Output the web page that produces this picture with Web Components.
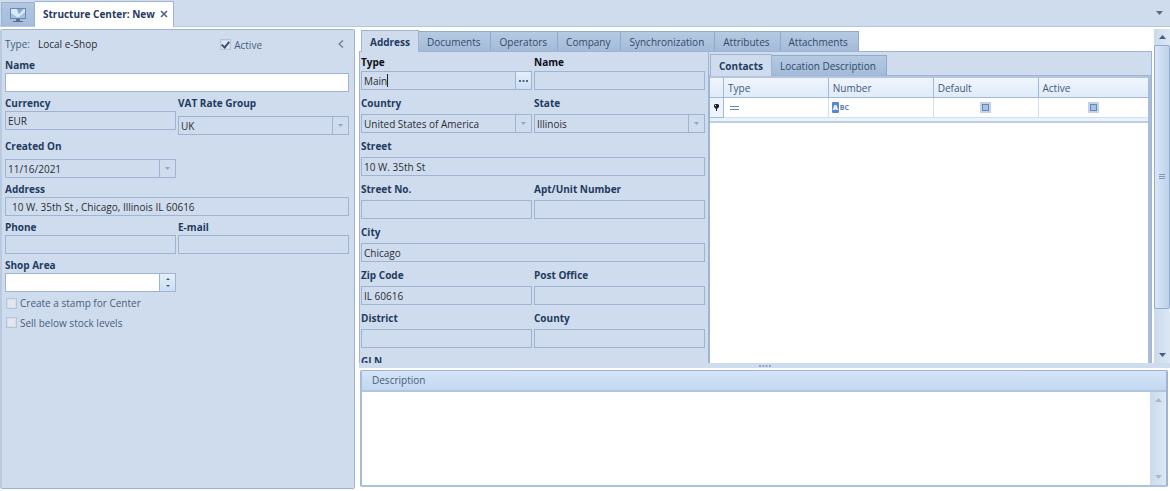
<!DOCTYPE html>
<html lang="en">
<head>
<meta charset="utf-8">
<title>Structure Center: New</title>
<style>
html, body {
  margin: 0;
  height: 100%;
}

body {
  --bg: #cfdced;
  --line: #9eb4d2;
  --soft: #b9cae0;
  --ink: #2b2d33;
  --muted: #475c7c;
  --bold: #1f3b60;
  font: 10px/16px "Open Sans", "Noto Sans", sans-serif;
  color: var(--ink);
  background: white;
  overflow: hidden;
}
</style>
</head>
<body>
<structure-center></structure-center>

<script>
const base = `
*{
  box-sizing: border-box;
}
button, input, select, textarea{
  font: inherit;
  color: inherit;
  margin: 0;
  padding: 0;
  border: 0;
  border-radius: 0;
  outline: none;
  background: none;
}
svg{
  display: block;
}
`;

// opens the shadow root and fills it with the shared rules and the element's own markup
class BaseElement extends HTMLElement {
  connectedCallback() {
    if (this.shadowRoot) return;
    this.attachShadow({ mode: "open" });
    const template = document.createElement("template");
    template.innerHTML = `<style>${base}</style>${this.render()}`;
    this.shadowRoot.appendChild(template.content.cloneNode(true));
    this.ready();
  }

  ready() {}
}

class WindowTabs extends BaseElement {
  render() {
    return `<style>
:host{
  display: flex;
  align-items: flex-end;
  height: 27px;
  padding-left: 1px;
  background: var(--bg);
  border-bottom: 1px solid #b5c6dd;
}
.home{
  width: 34px;
  height: 24px;
  display: flex;
  align-items: center;
  justify-content: center;
  background: linear-gradient(#b0c6e1, #a5bddb);
  border: 1px solid #9ab2d3;
  border-bottom: 0;
}
.tab{
  display: flex;
  align-items: center;
  gap: 5px;
  height: 26px;
  padding: 0 5px 2px 8px;
  margin-bottom: -1px;
  background: white;
  border: 1px solid var(--line);
  border-width: 1px 1px 0 0;
  font-weight: bold;
  color: var(--bold);
}
.more{
  margin: 0 7px 11px auto;
}
</style>
<button class="home" aria-label="Home"><svg width="18" height="16" viewBox="0 0 18 16">
<rect x="1" y="1" width="16" height="11" fill="#7087ad"/>
<rect x="2" y="2" width="14" height="9" fill="#a4c0e2"/>
<path d="M2 2h6l2 5 5-5h1v3l-6 5H8L2 6z" fill="#dbe9f7"/>
<path d="M8 2h6l-4 5z" fill="#88a8d3"/>
<path d="M7 12h4v2H7zM4 14h10v1H4z" fill="#596f94"/>
</svg></button>
<div class="tab"><span>Structure Center: New</span>
<button aria-label="Close"><svg width="8" height="8" viewBox="0 0 8 8"><path d="M1 1l6 6M7 1L1 7" stroke="#526486" stroke-width="1.6"/></svg></button></div>
<button class="more" aria-label="Open windows"><svg width="7" height="4" viewBox="0 0 7 4"><path d="M0 0h7L3.500 4z" fill="#596a8c"/></svg></button>`;
  }
}
customElements.define("window-tabs", WindowTabs);

class TabStrip extends BaseElement {
  render() {
    const tabs = this.getAttribute("tabs").split("|");
    return `<style>
:host{
  display: flex;
  align-items: flex-end;
  height: 22px;
  padding-left: 2px;
  border-bottom: 1px solid var(--line);
}
button{
  height: 20px;
  padding: 0 10px 0 8px;
  border: 1px solid #8fa9cc;
  border-width: 1px 1px 0 0;
  background: linear-gradient(#b4cae3, #a4bbd8);
  color: #34496b;
  white-space: nowrap;
}
button[aria-selected=true]{
  height: 22px;
  margin-bottom: -1px;
  padding: 0 8px;
  border-color: var(--line);
  border-left-width: 1px;
  background: var(--bg);
  color: var(--bold);
  font-weight: bold;
}
</style>
${tabs
  .map((tab, i) => `<button role="tab" aria-selected="${i === 0}">${tab}</button>`)
  .join("")}`;
  }

  ready() {
    this.setAttribute("role", "tablist");
    const tabs = this.shadowRoot.querySelectorAll("button");
    tabs.forEach((tab) => {
      tab.addEventListener("click", () => {
        tabs.forEach((t) => t.setAttribute("aria-selected", t === tab));
      });
    });
  }
}
customElements.define("tab-strip", TabStrip);

// kind: text (default), select, date, lookup, spin
class FormField extends BaseElement {
  control() {
    const kind = this.getAttribute("kind");
    const value = this.getAttribute("value") || "";
    const arrow = `<svg width="5" height="3" viewBox="0 0 5 3"><path d="M0 0h5L2.500 3z" fill="#94a7c2"/></svg>`;
    if (kind === "select") {
      return `<select id="c"><option>${value}</option></select><span class="side">${arrow}</span>`;
    }
    if (kind === "date") {
      return `<input id="c" value="${value}"><button class="side" aria-label="Open calendar">${arrow}</button>`;
    }
    if (kind === "lookup") {
      return `<input id="c" class="caret" value="${value}"><button class="side raised" aria-label="Choose"><svg width="9" height="2" viewBox="0 0 9 2"><path d="M0 0h2v2H0zM3.500 0h2v2h-2zM7 0h2v2H7z" fill="#53678c"/></svg></button>`;
    }
    if (kind === "spin") {
      return `<input id="c" value="${value}"><span class="side raised spin">
<button aria-label="Up"><svg width="4" height="2" viewBox="0 0 4 2"><path d="M0 2h4L2 0z" fill="#43587d"/></svg></button>
<button aria-label="Down"><svg width="4" height="2" viewBox="0 0 4 2"><path d="M0 0h4L2 2z" fill="#43587d"/></svg></button></span>`;
    }
    return `<input id="c" value="${value}">`;
  }

  render() {
    return `<style>
:host{
  display: block;
  min-width: 0;
}
:host([wide]){
  grid-column: 1 / -1;
}
:host([dark]){
  --bold: #0c0f16;
}
:host([tall]){
  --label-gap: 5px;
}
:host([tight]){
  --label-gap: 1px;
}
label{
  display: block;
  margin-bottom: var(--label-gap, 0);
  font-weight: bold;
  color: var(--bold);
}
.box{
  display: flex;
  height: 19px;
  border: 1px solid var(--line);
}
:host([editable]) .box{
  background: white;
}
input, select{
  flex: 1;
  min-width: 0;
  padding: 1px 3px 0 2px;
  appearance: none;
}
:host([inset]) input{
  padding-left: 6px;
}
.side{
  flex: none;
  width: 16px;
  display: flex;
  align-items: center;
  justify-content: center;
  border-left: 1px solid var(--line);
  pointer-events: none;
}
.raised{
  background: linear-gradient(#e5eff9, #cbdff3);
  pointer-events: auto;
}
.spin{
  flex-direction: column;
  gap: 5px;
}
.spin button{
  display: block;
}
.caret{
  background: linear-gradient(#222, #222) 25px center / 1px 13px no-repeat;
  caret-color: transparent;
}
</style>
<label for="c">${this.getAttribute("label")}</label>
<div class="box">${this.control()}</div>`;
  }

  ready() {
    if (this.getAttribute("kind") !== "spin") return;
    const input = this.shadowRoot.querySelector("input");
    this.shadowRoot.querySelectorAll("button").forEach((button, i) => {
      button.addEventListener("click", () => {
        input.value = Number(input.value) + (i === 0 ? 1 : -1);
      });
    });
  }
}
customElements.define("form-field", FormField);

class CheckField extends BaseElement {
  render() {
    return `<style>
:host{
  display: block;
  color: var(--muted);
}
label{
  display: inline-flex;
  align-items: center;
  gap: 3px;
}
input{
  appearance: none;
  display: grid;
  place-items: center;
  width: 11px;
  height: 11px;
  border: 1px solid #b1c5de;
  background: #e3e6ea;
  box-shadow: inset 0 0 0 1px #d5dde7;
}
input:checked::before{
  content: "";
  width: 3px;
  height: 6px;
  margin-top: -2px;
  border: solid #34527f;
  border-width: 0 2px 2px 0;
  transform: rotate(40deg);
}
</style>
<label><input type="checkbox"${this.hasAttribute("checked") ? " checked" : ""}><slot></slot></label>`;
  }
}
customElements.define("check-field", CheckField);

class ScrollBar extends BaseElement {
  render() {
    return `<style>
:host{
  display: flex;
  flex-direction: column;
  align-items: center;
  width: 16px;
  background: linear-gradient(90deg, #cbdaeb, #dbe7f3);
  --arrow: #4b5d86;
}
:host([idle]){
  --arrow: #a9b8ce;
}
button{
  flex: none;
  width: 16px;
  height: 16px;
  display: grid;
  place-items: center;
}
.track{
  flex: 1;
  align-self: stretch;
  padding-bottom: 38px;
}
.thumb{
  height: 100%;
  display: grid;
  place-items: center;
  border: 1px solid #92abd0;
  border-radius: 2px;
  background: linear-gradient(90deg, #dbe7f5, #bdd1ea);
}
:host([idle]) .thumb{
  display: none;
}
</style>
<button aria-label="Scroll up"><svg width="7" height="4" viewBox="0 0 7 4"><path d="M0 4h7L3.500 0z" fill="var(--arrow)"/></svg></button>
<div class="track"><div class="thumb"><svg width="6" height="7" viewBox="0 0 6 7"><path d="M0 .5h6M0 2.500h6M0 4.500h6" stroke="#8099c1"/></svg></div></div>
<button aria-label="Scroll down"><svg width="7" height="4" viewBox="0 0 7 4"><path d="M0 0h7L3.500 4z" fill="var(--arrow)"/></svg></button>`;
  }
}
customElements.define("scroll-bar", ScrollBar);

class ShopPanel extends BaseElement {
  render() {
    return `<style>
:host{
  display: block;
  background: var(--bg);
  border: 1px solid var(--line);
  border-left: 2px solid var(--soft);
  border-radius: 2px;
  padding: 4px 5px 0 3px;
}
.head{
  display: flex;
  align-items: center;
  height: 20px;
}
.type{
  color: var(--muted);
  width: 33px;
}
.head check-field{
  margin-left: auto;
}
.head button{
  margin: 0 5px 0 76px;
}
.fields{
  display: grid;
  grid-template-columns: 1fr 1fr;
  gap: 3px 2px;
  margin-top: 3px;
}
.half{
  grid-column: 1;
}
.checks{
  padding: 3px 0 0 1px;
  display: grid;
  gap: 2px;
}
</style>
<div class="head">
<span class="type">Type:</span><span>Local e-Shop</span>
<check-field checked>Active</check-field>
<button aria-label="Collapse"><svg width="6" height="8" viewBox="0 0 6 8"><path d="M5 .5L1 4l4 3.500" fill="none" stroke="#70809b" stroke-width="1.500"/></svg></button>
</div>
<div class="fields">
<form-field wide editable label="Name"></form-field>
<form-field label="Currency" value="EUR"></form-field>
<form-field tall kind="select" label="VAT Rate Group" value="UK"></form-field>
<form-field tall class="half" kind="date" label="Created On" value="11/16/2021"></form-field>
<form-field wide inset label="Address" value="10 W. 35th St , Chicago, Illinois IL 60616"></form-field>
<form-field label="Phone"></form-field>
<form-field label="E-mail"></form-field>
<form-field class="half" editable kind="spin" label="Shop Area"></form-field>
</div>
<div class="checks">
<check-field>Create a stamp for Center</check-field>
<check-field>Sell below stock levels</check-field>
</div>`;
  }
}
customElements.define("shop-panel", ShopPanel);

class AddressForm extends BaseElement {
  render() {
    return `<style>
:host{
  display: block;
  overflow: hidden;
  padding: 2px 3px 0 1px;
  --label-gap: 3px;
}
.fields{
  display: grid;
  grid-template-columns: 1fr 1fr;
  gap: 5px 2px;
}
</style>
<div class="fields">
<form-field tight dark kind="lookup" label="Type" value="Main"></form-field>
<form-field tight dark label="Name"></form-field>
<form-field kind="select" label="Country" value="United States of America"></form-field>
<form-field kind="select" label="State" value="Illinois"></form-field>
<form-field wide label="Street" value="10 W. 35th St"></form-field>
<form-field label="Street No."></form-field>
<form-field label="Apt/Unit Number"></form-field>
<form-field wide label="City" value="Chicago"></form-field>
<form-field label="Zip Code" value="IL 60616"></form-field>
<form-field label="Post Office"></form-field>
<form-field label="District"></form-field>
<form-field label="County"></form-field>
<form-field wide label="GLN"></form-field>
</div>`;
  }
}
customElements.define("address-form", AddressForm);

class ContactsGrid extends BaseElement {
  render() {
    return `<style>
:host{
  display: block;
  background: white;
  border: 1px solid var(--line);
  border-width: 0 0 0 1px;
  border-right: 3px solid #a9bdd9;
  border-top: 2px solid #b4c6df;
}
table{
  width: 100%;
  table-layout: fixed;
  border-collapse: separate;
  border-spacing: 0;
}
th{
  height: 20px;
  padding: 0 4px;
  text-align: left;
  font-weight: normal;
  color: #42587a;
  border: 1px solid #a5b9d5;
  border-width: 0 1px 1px 0;
  background: linear-gradient(#f0f5fc, #deebf9);
}
td{
  height: 20px;
  padding: 0 3px;
  border: 1px solid #cfe0f5;
  border-width: 0 1px 1px 0;
}
td:first-child{
  padding-left: 4px;
  background: #edf4fc;
  border-color: #a5b9d5;
}
td.equals{
  padding-left: 6px;
}
th:last-child, td:last-child{
  border-right: 0;
}
.mark{
  width: 14px;
}
.wide{
  width: 25%;
}
.foot{
  height: 5px;
  background: #eaf2fb;
  border-bottom: 2px solid #bfcfe4;
}
input{
  appearance: none;
  display: block;
  width: 11px;
  height: 11px;
  margin: 0 auto;
  border: 2px solid #c3d3e7;
  background: #a4c2e3;
  box-shadow: inset 0 0 0 1px #6688b6;
}
.abc{
  display: flex;
  align-items: center;
  gap: 1px;
  font-size: 7px;
  line-height: 11px;
  font-weight: bold;
  color: #5c80bb;
}
.abc b{
  width: 7px;
  text-align: center;
  color: white;
  background: #5a87d5;
  border-radius: 1px;
}
</style>
<table>
<colgroup><col class="mark"><col><col><col><col class="wide"></colgroup>
<tr><th></th><th>Type</th><th>Number</th><th>Default</th><th>Active</th></tr>
<tr>
<td><svg width="5" height="7" viewBox="0 0 5 7"><path d="M1 0h3l1 1v2L3 5v2H2V5L0 3V1z" fill="#1b2330"/><path d="M1 1h1v1H1z" fill="#fff"/></svg></td>
<td class="equals"><svg width="9" height="4" viewBox="0 0 9 4"><path d="M0 .5h9M0 3.500h9" stroke="#6283b4"/></svg></td>
<td><span class="abc"><b>A</b>BC</span></td>
<td><input type="checkbox" aria-label="Default"></td>
<td><input type="checkbox" aria-label="Active"></td>
</tr>
</table>
<div class="foot"></div>`;
  }
}
customElements.define("contacts-grid", ContactsGrid);

class DescriptionPanel extends BaseElement {
  render() {
    return `<style>
:host{
  display: flex;
  flex-direction: column;
  border: 1px solid var(--line);
  border-left: 2px solid #a6bbd7;
  border-right-width: 2px;
  border-bottom: 2px solid #afc2dc;
  border-radius: 2px;
}
label{
  padding: 1px 10px;
  line-height: 17px;
  color: var(--muted);
  background: linear-gradient(#d5e4f7, #c3d8f1);
  border-bottom: 2px solid #b0c5e0;
}
.body{
  flex: 1;
  display: flex;
}
textarea{
  flex: 1;
  padding: 2px 4px;
  resize: none;
  background: white;
}
</style>
<label for="text">Description</label>
<div class="body"><textarea id="text"></textarea><scroll-bar idle></scroll-bar></div>`;
  }
}
customElements.define("description-panel", DescriptionPanel);

class StructureCenter extends BaseElement {
  render() {
    return `<style>
:host{
  display: flex;
  flex-direction: column;
  height: 100vh;
}
main{
  flex: 1;
  min-height: 0;
  display: flex;
  gap: 4px;
  padding: 2px 0;
}
shop-panel{
  flex: none;
  width: 355px;
}
.right{
  flex: 1;
  min-width: 0;
  display: flex;
  flex-direction: column;
}
.top{
  flex: 1;
  min-height: 0;
  display: flex;
  gap: 2px;
}
.pages{
  flex: 1;
  min-width: 0;
  display: flex;
  flex-direction: column;
  padding-top: 1px;
}
.page{
  flex: 1;
  min-height: 0;
  display: flex;
  background: var(--bg);
  border: 1px solid var(--line);
  border-width: 0 1px;
}
address-form{
  flex: none;
  width: 348px;
}
.contacts{
  flex: 1;
  min-width: 0;
  display: flex;
  flex-direction: column;
  padding-top: 2px;
  border-left: 1px solid var(--line);
}
.contacts tab-strip{
  padding-left: 1px;
}
contacts-grid{
  flex: 1;
}
.splitter{
  flex: none;
  height: 5px;
  display: grid;
  place-items: center;
  background: var(--bg);
}
description-panel{
  flex: none;
  height: 117px;
  margin: 2px 2px 2px 1px;
}
</style>
<window-tabs></window-tabs>
<main>
<shop-panel></shop-panel>
<div class="right">
<div class="top">
<div class="pages">
<tab-strip tabs="Address|Documents|Operators|Company|Synchronization|Attributes|Attachments"></tab-strip>
<div class="page">
<address-form></address-form>
<div class="contacts">
<tab-strip tabs="Contacts|Location Description"></tab-strip>
<contacts-grid></contacts-grid>
</div>
</div>
</div>
<scroll-bar></scroll-bar>
</div>
<div class="splitter"><svg width="12" height="2" viewBox="0 0 12 2"><path d="M0 0h2v2H0zM3.300 0h2v2h-2zM6.600 0h2v2h-2zM10 0h2v2h-2z" fill="#91a8ca"/></svg></div>
<description-panel></description-panel>
</div>
</main>`;
  }
}
customElements.define("structure-center", StructureCenter);
</script>
</body>
</html>
